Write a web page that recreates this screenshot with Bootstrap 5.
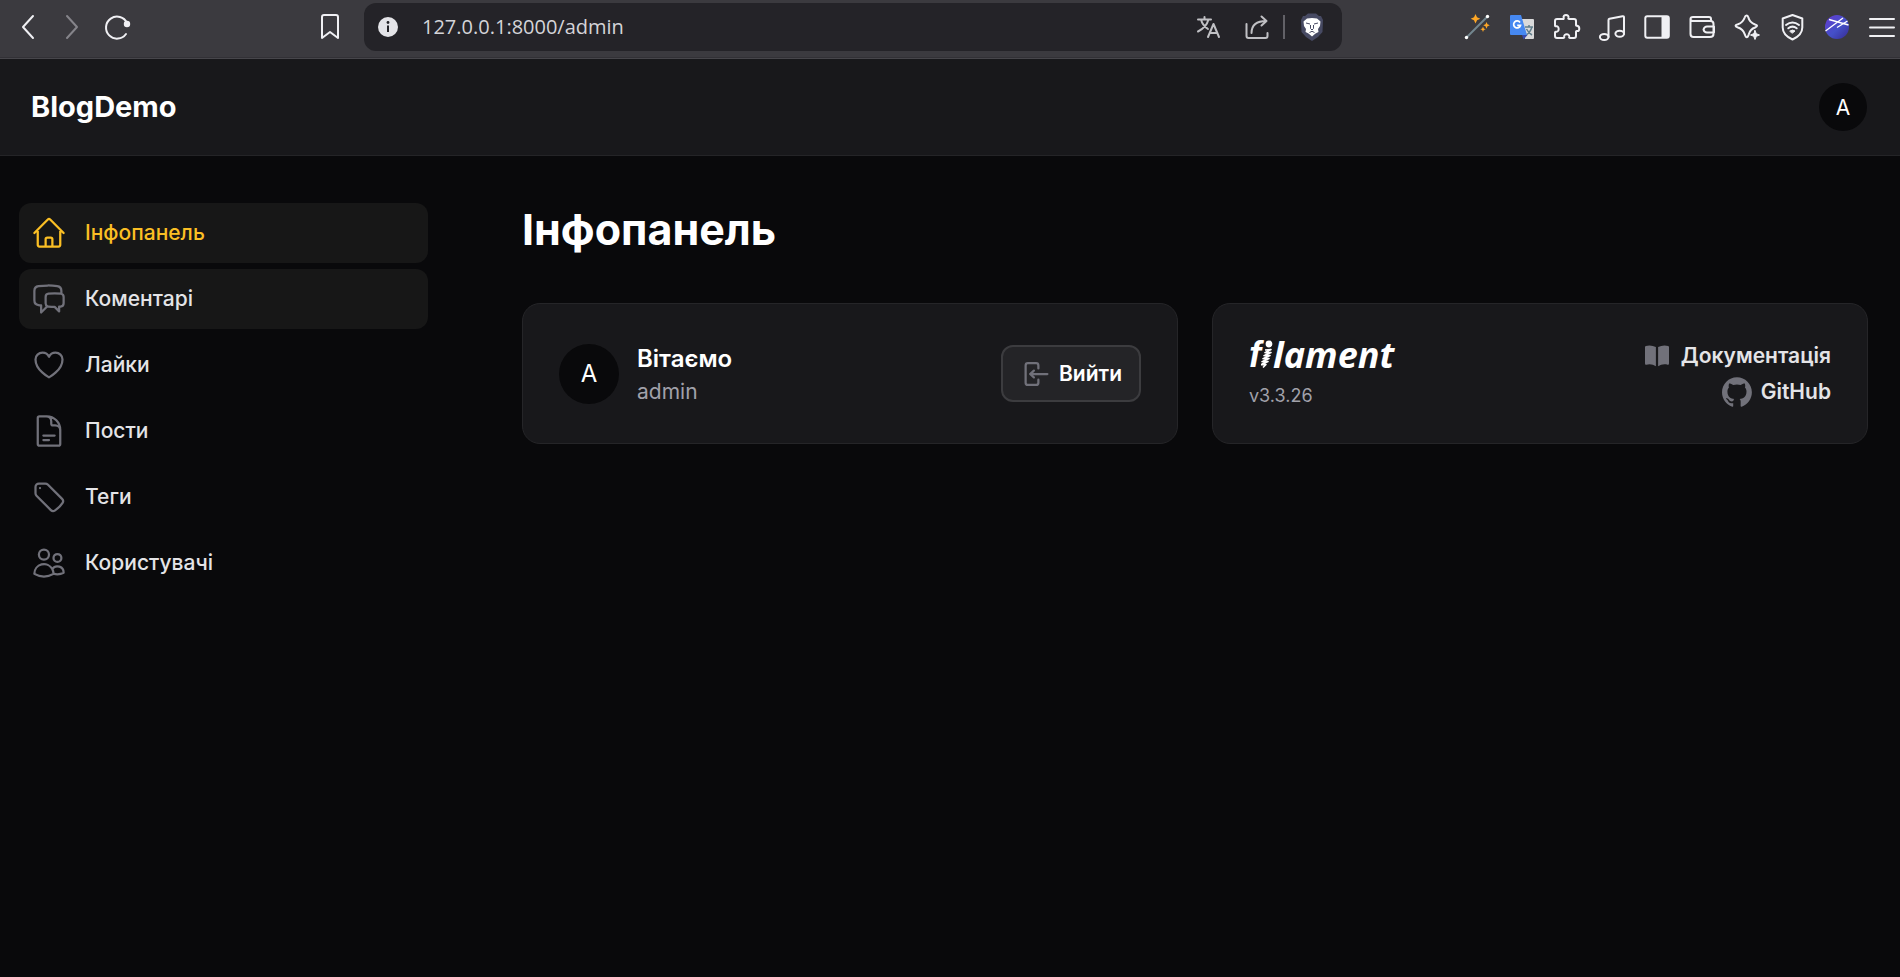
<!DOCTYPE html>
<html lang="uk" data-bs-theme="dark">
<head>
<meta charset="utf-8">
<meta name="viewport" content="width=device-width, initial-scale=1">
<title>Інфопанель - BlogDemo</title>
<link href="https://cdn.jsdelivr.net/npm/bootstrap@5.3.0/dist/css/bootstrap.min.css" rel="stylesheet">
<style>
body{background:#09090b;color:#fff;font-family:Inter,"Liberation Sans",sans-serif;font-size:21px;line-height:30px}
svg{display:block;flex-shrink:0}
.ln{fill:none;stroke:currentColor;stroke-width:2;stroke-linecap:round;stroke-linejoin:round}
.chrome{background:#3b3a3f;height:59px;padding:3px 3px 8px 12px;border-bottom:1px solid #47464b;box-shadow:inset 0 -1px #323136}
.tool{background:none;border:0;padding:0;color:#f0f0f4}
.tool:disabled{color:#85848a}
.tools-left{width:352px;padding-right:22px;gap:15px}
.tools-right{gap:15px}
.address{background:#242328;border-radius:12px;height:48px;flex:0 1 978px;padding:0 18px 0 9px;color:#c6c6ca}
.address input{background:none;border:0;outline:0;color:#d4d4d8;font-family:"Open Sans","Noto Sans",sans-serif;font-size:20px;min-width:0;padding:0;margin-left:19px}
.address .dim{color:#c0c0c4}
.address-actions{gap:13px}
.sep{width:2px;height:24px;background:#626167;margin-right:2px}
.topbar{background:#18181b;height:97px;border-bottom:1px solid #242427;padding:0 33px 0 31px}
.brand{font-size:29px;font-weight:700;color:#fff;text-decoration:none}
.avatar{background:#09090b;color:#fff;border:0;border-radius:50%;width:48px;height:48px;padding:0;line-height:1}
.avatar-lg{width:60px;height:60px;font-size:24px}
.side{width:480px;padding:47px 52px 0 19px;gap:6px}
.side a{gap:18px;height:60px;padding:0 12px;border-radius:12px;color:#e4e4e7;font-weight:500;text-decoration:none}
.side svg{color:#71717a;width:36px;height:36px;stroke-width:1.5}
.side a.lit{background:#171717}
.side a.active,.side a.active svg{color:#fbbf24}
.content{padding:46px 32px 0 42px}
.content h1{font-size:43px;line-height:54px;font-weight:700;margin-bottom:47px}
.panels{display:grid;grid-template-columns:1fr 1fr;gap:34px}
.panel{background:#18181b;border:1px solid #252528;border-radius:18px;min-height:141px;padding:0 36px}
.user-line{gap:18px}
.hello{font-size:24px;line-height:36px;font-weight:600}
.soft{color:#a1a1aa}
.btn-out{background:#242427;border:2px solid #3c3c3f;border-radius:12px;height:57px;padding:0 17px;gap:9px;color:#fff;font-size:21px;font-weight:600}
.btn-out:hover{background:#2c2c2f;color:#fff}
.btn-out svg,.ext svg{color:#71717a}
.filament{color:#fff;text-decoration:none;font-family:"Open Sans","Noto Sans",sans-serif;font-size:36px;line-height:30px;font-weight:700;font-style:italic}
.filament-f{font-family:"Liberation Sans",sans-serif}
.ver{font-size:18px;line-height:24px;margin-top:14px}
.ext{color:#e4e4e7;font-weight:600;text-decoration:none;gap:9px;line-height:36px}
</style>
</head>
<body class="min-vh-100 d-flex flex-column">
<div class="chrome d-flex align-items-center">
  <div class="tools-left d-flex align-items-center flex-shrink-0">
    <button class="tool" aria-label="Назад"><svg class="ln" width="30" height="30"><path d="M21 4 11 15l10 11"/></svg></button>
    <button class="tool" aria-label="Вперед" disabled><svg class="ln" width="30" height="30"><path d="M10 4l10 11-10 11"/></svg></button>
    <button class="tool" aria-label="Оновити"><svg class="ln" width="30" height="30"><path d="M24 22A11 11 0 1 1 25 11"/><circle cx="25" cy="12" r="2.2" fill="currentColor"/></svg></button>
    <button class="tool ms-auto" aria-label="Закладка"><svg class="ln" width="24" height="30"><path d="M4 26V5q0-2 2-2h12q2 0 2 2v21l-8-6z"/></svg></button>
  </div>
  <div class="address d-flex align-items-center">
    <svg width="30" height="30"><circle cx="15" cy="15" r="10" fill="#e4e4e8"/><path d="M15 13.5V20" stroke="#242328" stroke-width="2"/><circle cx="15" cy="10.5" r="1.4" fill="#242328"/></svg>
    <input class="flex-fill" type="text" value="127.0.0.1:8000/admin" aria-label="Адреса">
    <div class="address-actions d-flex align-items-center">
      <button class="tool dim me-2" aria-label="Перекласти"><svg class="ln" width="30" height="30" viewBox="-2 0 30 30"><path d="M3 7.500h13M9.500 5v2.500M13.500 7.500C12 13 8 17 3 19.500M6 7.500c1 4 4 7.500 7 9.500M13 25l5.500-13L24 25M15 21h7"/></svg></button>
      <button class="tool dim" aria-label="Поділитися"><svg class="ln" width="26" height="30" viewBox="0 0 26 30"><path d="M2.500 12v12q0 2 2 2h17q2 0 2-2v-3M7.500 21c0-8 5-12 15-12M17.500 4.500l5 4.500-5 4.500"/></svg></button>
      <span class="sep"></span>
      <button class="tool" aria-label="Brave Shields"><svg width="24" height="30" viewBox="0 0 24 30"><path d="M8 1.500h8l3 2.500h2l2 4-.5 12L18 25l-6 4-6-4-4.500-5L1 8l2-4h2z" fill="#474a63"/><path d="M7 6.500l5-.5 5 .5 3.500 3-.5 4.500-2 3 .500 3-3 1.500-3.500 3-3.500-3-3-1.500.5-3-2-3L3.500 9.500z" fill="#fff"/><path d="M6 11l4 1M18 11l-4 1M10.500 13v3.500L12 18l1.500-1.500V13M9.500 20.500l2.500-1.200 2.500 1.200" fill="none" stroke="#474a63" stroke-width="1"/></svg></button>
    </div>
  </div>
  <div class="tools-right d-flex align-items-center ms-auto">
    <button class="tool" aria-label="Чарівна паличка"><svg width="30" height="30"><path d="M4.500 25.500l21-21" stroke="#73868f" stroke-width="2"/><circle cx="4.500" cy="25.500" r="1.700" fill="#fff"/><circle cx="25.500" cy="4.500" r="1.700" fill="#fff"/><path d="M13.500 2l1.500 3.300 3.300 1.500-3.300 1.500-1.500 3.300-1.500-3.300-3.300-1.500 3.300-1.500zM24.500 10l1 2.300 2.300 1-2.300 1-1 2.400-1-2.400-2.300-1 2.300-1zM21 14.500l.8 1.900 1.900.8-1.900.8-.8 1.900-.8-1.900-1.900-.8 1.900-.8z" fill="#ffa726"/></svg></button>
    <button class="tool" aria-label="Google Translate"><svg width="30" height="30"><path d="M14 7h12q1 0 1 1v18q0 1-1 1H18z" fill="#d9d9da"/><path d="M18 15h8M22 13v2M25 15q-2 6-6 8M19.500 17q2 4 5.500 6" fill="none" stroke="#607d8b" stroke-width="1.500"/><path d="M15 23h5.500l-4 4.500z" fill="#3749ab"/><path d="M4 3h10l6 20H4q-1 0-1-1V4q0-1 1-1z" fill="#4688f1"/><path d="M13 10.400a3.500 3.500 0 1 0 .5 3H10.200" fill="none" stroke="#fff" stroke-width="1.700"/></svg></button>
    <button class="tool" aria-label="Розширення"><svg class="ln" width="30" height="30"><path d="M5 7h6c.7 0 .9-.5.7-1.200C11 4 12.500 3 14 3s3 1 2.400 2.800c-.3.700 0 1.200.7 1.200H22q2 0 2 2v4c0 .7.500 1 1.200.8C28 14.500 28 19.500 25.200 19c-.7-.2-1.200.1-1.200.8V24q0 2-2 2h-4c-.7 0-1-.4-.8-1.100.6-3.600-5.600-3.600-5 0 .2.700-.2 1.100-.9 1.100H5q-2 0-2-2v-3.500c0-.7.500-1 1.200-.8 3.300.5 3.300-5.900 0-5.400C3.500 14.500 3 14.200 3 13.500V9q0-2 2-2z"/></svg></button>
    <button class="tool" aria-label="Музика"><svg class="ln" width="30" height="30"><path d="M11.500 25V8q0-1 1-1.300l13-2.500q1.500-.2 1.500 1V22"/><ellipse cx="7.200" cy="25" rx="4.300" ry="3"/><ellipse cx="22.700" cy="21.800" rx="4.300" ry="3"/></svg></button>
    <button class="tool" aria-label="Бічна панель"><svg class="ln" width="30" height="30"><rect x="3.300" y="4.300" width="23.500" height="21.500" rx="2"/><path d="M20.500 5H26v20h-5.500z" fill="currentColor"/></svg></button>
    <button class="tool" aria-label="Гаманець"><svg class="ln" width="30" height="30"><path d="M24 9V7q0-2-2-2H6Q3.500 5 3.500 7v15q0 3 3 3H23q3.500 0 3.500-3V12q0-3-3-3H6q-2.500 0-2.500-2M27 14.500h-7q-2.500 0-3.500 3 .8 3 3.500 3h7z"/></svg></button>
    <button class="tool" aria-label="Leo AI"><svg class="ln" width="30" height="30"><path d="M14.500 3.500q1.200 0 1.800 1.800 1.200 5.200 6.800 7.200 4 1.200 0 3-4.800 1.500-6.300 6.800-2 5.700-4 0-1.800-5.300-6.800-6.800-5-1.800 0-3.200 5-1.600 6.800-7Q13.300 3.500 14.500 3.500z"/><path d="M23 18.500l1.300 3.200 3.200 1.300-3.200 1.300L23 27.500l-1.300-3.200-3.200-1.300 3.200-1.300z" fill="currentColor" stroke-width="1"/></svg></button>
    <button class="tool" aria-label="VPN"><svg class="ln" width="30" height="30"><path d="M15.500 3l9.800 3.500v9q0 7.500-9.800 12-9.800-4.500-9.800-12v-9z"/><path d="M9 13q6.500-5 13 0M11.300 16.300q4.200-3.300 8.400 0"/><path d="M13 19q2.500-2 5 0l-2.500 2z" fill="currentColor" stroke-width="1"/></svg></button>
    <button class="tool" aria-label="Профіль"><svg width="30" height="30"><defs><linearGradient id="orb" x1="0" y1="0" x2="1" y2="1"><stop stop-color="#653bd0"/><stop offset=".55" stop-color="#4450c8"/><stop offset="1" stop-color="#372a92"/></linearGradient></defs><circle cx="15" cy="15" r="12" fill="url(#orb)"/><path d="M3.500 19 21 6M7 7.500l19.500 5.500M15 15.500 25.500 9" stroke="#fff" stroke-width="1.300" fill="none"/></svg></button>
    <button class="tool" aria-label="Меню"><svg class="ln" width="30" height="30"><path d="M3 7h24M3 15.500h24M3 24h24"/></svg></button>
  </div>
</div>

<header class="topbar d-flex align-items-center justify-content-between">
  <a class="brand" href="#">BlogDemo</a>
  <button class="avatar" aria-label="Меню користувача">A</button>
</header>

<div class="d-flex flex-fill">
  <nav class="side d-flex flex-column flex-shrink-0" aria-label="Навігація">
    <a class="lit active d-flex align-items-center" href="#" aria-current="page"><svg class="ln" viewBox="0 0 24 24"><path d="m2.250 12 8.954-8.955c.44-.439 1.152-.439 1.591 0L21.750 12M4.500 9.750v10.125c0 .621.504 1.125 1.125 1.125H9.750v-4.875c0-.621.504-1.125 1.125-1.125h2.250c.621 0 1.125.504 1.125 1.125V21h4.125c.621 0 1.125-.504 1.125-1.125V9.750M8.250 21h8.250"/></svg>Інфопанель</a>
    <a class="lit d-flex align-items-center" href="#"><svg class="ln" viewBox="0 0 24 24"><path d="M20.250 8.511c.884.284 1.500 1.128 1.500 2.097v4.286c0 1.136-.847 2.100-1.980 2.193-.34.027-.68.052-1.020.072v3.091l-3-3c-1.354 0-2.694-.055-4.020-.163a2.115 2.115 0 0 1-.825-.242m9.345-8.334a2.126 2.126 0 0 0-.476-.095 48.640 48.640 0 0 0-8.048 0c-1.131.094-1.976 1.057-1.976 2.192v4.286c0 .837.46 1.580 1.155 1.951m9.345-8.334V6.637c0-1.621-1.152-3.026-2.760-3.235A48.455 48.455 0 0 0 11.250 3c-2.115 0-4.198.137-6.240.402-1.608.209-2.760 1.614-2.760 3.235v6.226c0 1.621 1.152 3.026 2.760 3.235.577.075 1.157.14 1.740.194V21l4.155-4.155"/></svg>Коментарі</a>
    <a class="d-flex align-items-center" href="#"><svg class="ln" viewBox="0 0 24 24"><path d="M21 8.250c0-2.485-2.099-4.500-4.688-4.500-1.935 0-3.597 1.126-4.312 2.733-.715-1.607-2.377-2.733-4.313-2.733C5.100 3.750 3 5.765 3 8.250c0 7.220 9 12 9 12s9-4.780 9-12Z"/></svg>Лайки</a>
    <a class="d-flex align-items-center" href="#"><svg class="ln" viewBox="0 0 24 24"><path d="M19.500 14.250v-2.625a3.375 3.375 0 0 0-3.375-3.375h-1.500A1.125 1.125 0 0 1 13.500 7.125v-1.500a3.375 3.375 0 0 0-3.375-3.375H8.250m0 12.750h7.500m-7.500 3H12M10.500 2.250H5.625c-.621 0-1.125.504-1.125 1.125v17.250c0 .621.504 1.125 1.125 1.125h12.750c.621 0 1.125-.504 1.125-1.125V11.250a9 9 0 0 0-9-9Z"/></svg>Пости</a>
    <a class="d-flex align-items-center" href="#"><svg class="ln" viewBox="0 0 24 24"><path d="M9.568 3H5.250A2.250 2.250 0 0 0 3 5.250v4.318c0 .597.237 1.170.659 1.591l9.581 9.581c.699.699 1.780.872 2.607.33a18.095 18.095 0 0 0 5.223-5.223c.542-.827.369-1.908-.33-2.607L11.160 3.660A2.250 2.250 0 0 0 9.568 3Z"/><path d="M6 6h.008v.008H6V6Z"/></svg>Теги</a>
    <a class="d-flex align-items-center" href="#"><svg class="ln" viewBox="0 0 24 24"><path d="M15 19.128a9.380 9.380 0 0 0 2.625.372 9.337 9.337 0 0 0 4.121-.952 4.125 4.125 0 0 0-7.533-2.493M15 19.128v-.003c0-1.113-.285-2.160-.786-3.070M15 19.128v.106A12.318 12.318 0 0 1 8.624 21c-2.331 0-4.512-.645-6.374-1.766l-.001-.109a6.375 6.375 0 0 1 11.964-3.070M12 6.375a3.375 3.375 0 1 1-6.750 0 3.375 3.375 0 0 1 6.750 0Zm8.250 2.250a2.625 2.625 0 1 1-5.250 0 2.625 2.625 0 0 1 5.250 0Z"/></svg>Користувачі</a>
  </nav>

  <main class="content flex-fill">
    <h1>Інфопанель</h1>
    <div class="panels">
      <section class="panel d-flex align-items-center justify-content-between">
        <div class="user-line d-flex align-items-center">
          <span class="avatar avatar-lg d-flex align-items-center justify-content-center">A</span>
          <div>
            <div class="hello">Вітаємо</div>
            <div class="soft">admin</div>
          </div>
        </div>
        <button class="btn btn-out d-flex align-items-center"><svg width="30" height="30" viewBox="0 0 20 20" fill="currentColor"><path d="M3 4.250A2.250 2.250 0 0 1 5.250 2h5.500A2.250 2.250 0 0 1 13 4.250v2a.75.75 0 0 1-1.500 0v-2a.75.75 0 0 0-.75-.75h-5.500a.75.75 0 0 0-.75.75v11.500c0 .414.336.75.75.75h5.500a.75.75 0 0 0 .75-.75v-2a.75.75 0 0 1 1.500 0v2A2.250 2.250 0 0 1 10.750 18h-5.500A2.250 2.250 0 0 1 3 15.750V4.250Z"/><path d="M19 10a.75.75 0 0 0-.75-.75H8.704l1.048-.943a.75.75 0 1 0-1.004-1.114l-2.500 2.250a.75.75 0 0 0 0 1.114l2.500 2.250a.75.75 0 1 0 1.004-1.114l-1.048-.943h9.546A.75.75 0 0 0 19 10Z"/></svg>Вийти</button>
      </section>
      <section class="panel d-flex align-items-center justify-content-between">
        <div>
          <a class="filament d-flex align-items-center" href="#" aria-label="filament"><span class="filament-f">f</span><svg width="12" height="30" viewBox="0 0 12 30"><circle cx="8" cy="4" r="3.400" fill="#fff"/><path d="M4 10l6-.5-6 3.200 6-.2-7 3.200 6-.2-7 3.200 6-.2-7 3.200 6-.2-7 3.200 5-.2-3 3" fill="none" stroke="#fff" stroke-width="1.600" stroke-linejoin="round"/></svg>lament</a>
          <div class="ver soft">v3.3.26</div>
        </div>
        <div class="d-flex flex-column align-items-end">
          <a class="ext d-flex align-items-center" href="#"><svg width="30" height="30" viewBox="0 0 20 20" fill="currentColor"><path d="M10.750 16.820A7.462 7.462 0 0 1 15 15.500c.71 0 1.396.098 2.046.282A.75.75 0 0 0 18 15.060v-11a.75.75 0 0 0-.546-.721A9.006 9.006 0 0 0 15 3a8.963 8.963 0 0 0-4.250 1.065V16.820ZM9.250 4.065A8.963 8.963 0 0 0 5 3c-.85 0-1.673.118-2.454.339A.75.75 0 0 0 2 4.060v11a.75.75 0 0 0 .954.721A7.506 7.506 0 0 1 5 15.500c1.579 0 3.042.487 4.250 1.320V4.065Z"/></svg>Документація</a>
          <a class="ext d-flex align-items-center" href="#"><svg width="30" height="30" viewBox="0 0 98 96" fill="currentColor"><path d="M48.854 0C21.839 0 0 22 0 49.217c0 21.756 13.993 40.172 33.405 46.690 2.427.49 3.316-1.059 3.316-2.362 0-1.141-.08-5.052-.08-9.127-13.590 2.934-16.420-5.867-16.420-5.867-2.184-5.704-5.420-7.170-5.420-7.170-4.448-3.015.324-3.015.324-3.015 4.934.326 7.523 5.052 7.523 5.052 4.367 7.496 11.404 5.378 14.235 4.074.404-3.178 1.699-5.378 3.074-6.600-10.839-1.141-22.243-5.378-22.243-24.283 0-5.378 1.940-9.778 5.014-13.200-.485-1.222-2.184-6.275.486-13.038 0 0 4.125-1.304 13.426 5.052a46.970 46.970 0 0 1 12.214-1.630c4.125 0 8.330.571 12.213 1.630 9.302-6.356 13.427-5.052 13.427-5.052 2.670 6.763.97 11.816.485 13.038 3.155 3.422 5.015 7.822 5.015 13.200 0 18.905-11.404 23.060-22.324 24.283 1.780 1.548 3.316 4.481 3.316 9.126 0 6.600-.08 11.897-.08 13.526 0 1.304.89 2.853 3.316 2.364 19.412-6.520 33.405-24.935 33.405-46.691C97.707 22 75.788 0 48.854 0z"/></svg>GitHub</a>
        </div>
      </section>
    </div>
  </main>
</div>
<script src="https://cdn.jsdelivr.net/npm/bootstrap@5.3.0/dist/js/bootstrap.bundle.min.js"></script>
</body>
</html>
